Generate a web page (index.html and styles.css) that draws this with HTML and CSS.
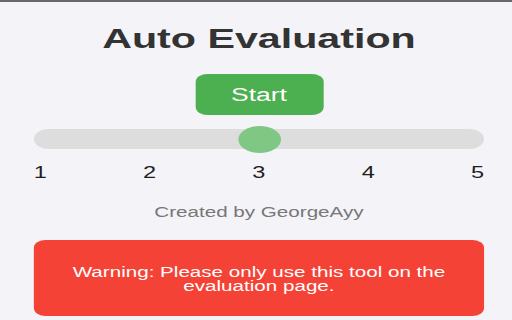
FILE: index.html
```html
<!DOCTYPE html>
<html lang="en">
<head>
<meta charset="utf-8">
<title>Auto Evaluation</title>
<link rel="stylesheet" href="styles.css">
</head>
<body>
<div class="popup">
  <h1 class="title">Auto Evaluation</h1>
  <div class="actions">
    <button class="start-btn" type="button">Start</button>
  </div>
  <div class="slider" role="slider" aria-valuemin="1" aria-valuemax="5" aria-valuenow="3">
    <div class="thumb"></div>
  </div>
  <div class="scale">
    <span>1</span>
    <span>2</span>
    <span>3</span>
    <span>4</span>
    <span>5</span>
  </div>
  <p class="credit">Created by GeorgeAyy</p>
  <div class="warning">Warning: Please only use this tool on the evaluation page.</div>
</div>
</body>
</html>
```

FILE: styles.css
```css
html, body {
  margin: 0;
  padding: 0;
  background: #f4f4f8;
  overflow: hidden;
}

body {
  width: 512px;
  height: 320px;
  font-family: "Liberation Sans", Arial, sans-serif;
}

.popup {
  width: 348px;
  min-height: 320px;
  box-sizing: border-box;
  padding: 0 19px 0 23px;
  border-top: 2px solid #66666c;
  transform: scaleX(1.4713);
  transform-origin: 0 0;
}

.title {
  margin: 21px 0 0;
  font-size: 28px;
  line-height: 32px;
  font-weight: bold;
  color: #333333;
  text-align: center;
}

.actions {
  display: flex;
  justify-content: center;
  margin-top: 19px;
}

.start-btn {
  width: 87px;
  padding: 11px 0 10px;
  border: none;
  border-radius: 8px;
  background: #4caf50;
  color: #ffffff;
  font-family: inherit;
  font-size: 18px;
  line-height: 20px;
}

.slider {
  display: flex;
  justify-content: center;
  align-items: center;
  height: 20px;
  margin-top: 14px;
  border-radius: 10px;
  background: #dddddd;
}

.thumb {
  flex: none;
  width: 29px;
  height: 27px;
  border-radius: 50%;
  background: #81c784;
}

.scale {
  display: flex;
  justify-content: space-between;
  margin-top: 14.5px;
  font-size: 16px;
  color: #1e1e1e;
}

.credit {
  margin: 22px 0 0;
  font-size: 14px;
  color: #777777;
  text-align: center;
}

.warning {
  margin-top: 20px;
  padding: 25px 20px 23px;
  border-radius: 8px;
  background: #f44336;
  color: #ffffff;
  font-size: 14px;
  line-height: 14px;
  text-align: center;
}
```
